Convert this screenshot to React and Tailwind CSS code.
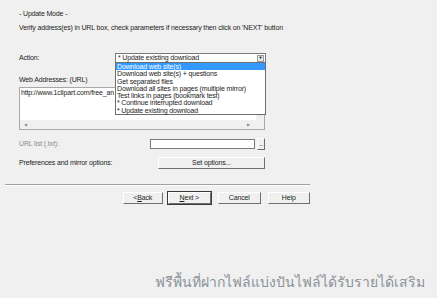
import React from "react";

const items = [
  "Download web site(s)",
  "Download web site(s) + questions",
  "Get separated files",
  "Download all sites in pages (multiple mirror)",
  "Test links in pages (bookmark test)",
  "* Continue interrupted download",
  "* Update existing download",
];

const WinButton = ({ children, isDefault, className = "" }) => (
  <div
    className={`flex items-center justify-center h-[12px] bg-[#f0f0f0] border-t border-l border-t-white border-l-white border-r border-b border-r-[#6e6e6e] border-b-[#6e6e6e] ${
      isDefault ? "outline outline-1 outline-[#3a3a3a]" : ""
    } ${className}`}
  >
    {children}
  </div>
);

const App = () => {
  return (
    <div className="w-[437px] h-[298px] bg-[#f0f0f0] overflow-hidden font-['Liberation_Sans',Arial,sans-serif] text-[7px] tracking-[-0.15px] leading-[8px] text-[#1c1c1c]">
      <div className="w-[310px] pl-[19px] pt-[10px] flex flex-col">
        {/* Header */}
        <div className="h-[8px]">- Update Mode -</div>
        <div className="h-[8px] mt-[6px] whitespace-nowrap">
          Verify address(es) in URL box, check parameters if necessary then click on 'NEXT' button
        </div>

        {/* Action */}
        <div className="flex items-center mt-[21px] h-[10px]">
          <div className="w-[96px]">Action:</div>
          <div className="relative w-[151px] h-[10px]">
            <div className="flex items-center h-full bg-white border border-[#7a7a7a] pl-[2px]">
              <span className="flex-1 whitespace-nowrap">* Update existing download</span>
              <span className="flex items-center justify-center w-[7px] h-[7px] mr-[1px] bg-[#e6e6e6] border border-[#9a9a9a] text-[4px] leading-none text-black">
                ▼
              </span>
            </div>
            <div className="absolute left-0 top-[9px] w-[151px] h-[53px] bg-white border border-[#6f6f6f] z-10 flex flex-col">
              {items.map((item, i) => (
                <div
                  key={i}
                  className={`h-[7.3px] leading-[7.3px] pl-[1px] whitespace-nowrap ${
                    i === 0 ? "bg-[#3399ff] text-white" : ""
                  }`}
                >
                  {item}
                </div>
              ))}
            </div>
          </div>
        </div>

        {/* Web addresses */}
        <div className="h-[8px] mt-[13px]">Web Addresses: (URL)</div>
        <div className="mt-[3px] w-[246px] h-[43px] bg-white border border-[#a9a9a9] flex flex-col">
          <div className="flex flex-1">
            <div className="flex-1">
              <div className="w-[94px] pl-[1px] pt-[1px] whitespace-nowrap overflow-hidden">
                http://www.1clipart.com/free_animations/
              </div>
            </div>
            <div className="w-[8px] bg-[#f0f0f0] flex flex-col justify-end items-center pb-[3px] text-[4px] leading-none text-[#9a9a9a]">
              ▼
            </div>
          </div>
          <div className="h-[9px] flex items-center bg-[#f0f0f0] text-[4px] leading-none text-[#8a8a8a]">
            <span className="pl-[4px]">◀</span>
            <span className="flex-1" />
            <span className="pr-[14px]">▶</span>
          </div>
        </div>

        {/* URL list */}
        <div className="flex items-center mt-[8px] h-[11px]">
          <div className="w-[131px] text-[#8c8c8c]">URL list (.txt):</div>
          <div className="w-[105px] h-[10px] bg-white border border-[#7a7a7a]" />
          <WinButton className="ml-[2px] w-[8px] h-[11px] leading-none">..</WinButton>
        </div>

        {/* Preferences */}
        <div className="flex items-center mt-[9px] h-[10px]">
          <div className="w-[139px]">Preferences and mirror options:</div>
          <WinButton className="w-[107px] h-[10px]">Set options...</WinButton>
        </div>

        {/* Separator */}
        <div className="-ml-[14px] w-[305px] mt-[16px] border-t border-t-[#a0a0a0] border-b border-b-white" />

        {/* Buttons */}
        <div className="flex items-center mt-[6px] ml-[104px] gap-[4px]">
          <WinButton className="w-[40px]">
            &lt; <span className="underline">B</span>ack
          </WinButton>
          <WinButton isDefault className="w-[44px] ml-[1px]">
            <span className="underline">N</span>ext &gt;
          </WinButton>
          <WinButton className="w-[43px] ml-[3px]">Cancel</WinButton>
          <WinButton className="w-[43px] ml-[3px]">Help</WinButton>
        </div>
      </div>

      {/* Footer text */}
      <div className="mt-[69px] pr-[12px] text-right text-[14px] leading-[17px] tracking-normal text-[#8b929a] font-['Noto_Sans','DejaVu_Sans',sans-serif] whitespace-nowrap">
        ฟรีพื้นที่ฝากไฟล์แบ่งปันไฟล์ได้รับรายได้เสริม
      </div>
    </div>
  );
};

export default App;
